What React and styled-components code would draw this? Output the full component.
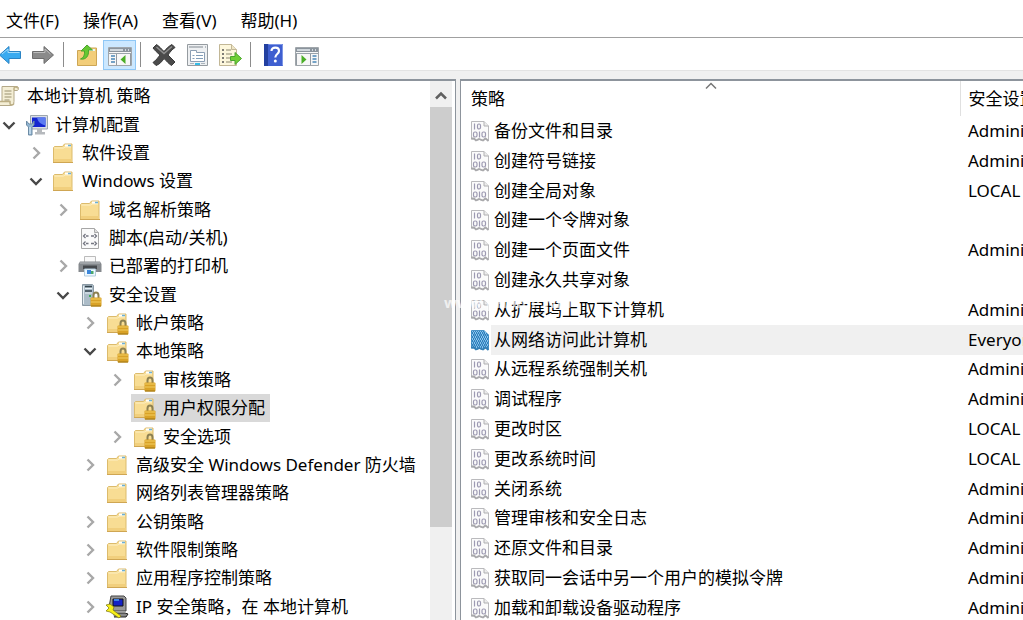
import React from "react";
import styled, { createGlobalStyle, css } from "styled-components";

const Global = createGlobalStyle`
  * { box-sizing: border-box; }
  html, body, #root { height: 100%; margin: 0; }
  body {
    overflow: hidden;
    background: #fff;
    color: #000;
    font-family: "Noto Sans", "Noto Sans CJK SC", sans-serif;
    font-size: 17px;
    line-height: 24px;
  }
  svg { display: block; flex: none; }
`;

const plainButton = css`
  padding: 0;
  border: 0;
  background: none;
  color: inherit;
  font: inherit;
`;

const Page = styled.div`
  position: relative;
  display: flex;
  flex-direction: column;
  height: 100%;
  background: #f0f0f0;
`;

const MenuBar = styled.nav`
  display: flex;
  flex: none;
  gap: 24px;
  height: 37px;
  padding: 4px 6px 0;
  background: #fff;
`;

const MenuButton = styled.button`
  ${plainButton}
  white-space: nowrap;
`;

const Toolbar = styled.div`
  display: flex;
  flex: none;
  align-items: flex-end;
  height: 34px;
  border-top: 1px solid #a0a0a0;
  border-bottom: 1px solid #e3e3e3;
  background: #fff;
`;

const ToolButton = styled.button`
  ${plainButton}
  display: grid;
  place-items: center;
  flex: none;
  width: 33px;
  height: 30px;
  border: 1px solid ${(p) => (p.$active ? "#90c8f6" : "transparent")};
  background: ${(p) => (p.$active ? "#cce8ff" : "transparent")};
`;

const BackButton = styled(ToolButton)`
  justify-items: start;
  width: 26px;
  border-width: 1px 0;
`;

const Divider = styled.span`
  flex: none;
  width: 1px;
  height: 25px;
  margin: 0 6px 3px 4px;
  background: #8c8c8c;
`;

const Workspace = styled.main`
  display: flex;
  flex: 1;
  gap: 4px;
  min-height: 0;
  margin-top: 8px;
`;

const TreePanel = styled.section`
  display: flex;
  flex: none;
  width: 456px;
  min-height: 0;
  padding-right: 3px;
  border: solid #8d949c;
  border-width: 2px 1px 0 0;
  background: #fff;
`;

const Tree = styled.ul`
  display: grid;
  flex: 1;
  grid-auto-rows: minmax(28px, 1fr);
  min-width: 0;
  margin: 0 0 -1px;
  padding: 1px 0 0;
  list-style: none;
`;

const TreeRow = styled.li`
  display: flex;
  align-items: center;
  min-width: 0;
  padding-left: ${(p) => p.$level * 27}px;
`;

const Toggle = styled.button`
  ${plainButton}
  display: grid;
  place-items: center;
  flex: none;
  width: 18px;
  height: 24px;
`;

const ToggleSpace = styled.span`
  flex: none;
  width: ${(p) => (p.$root ? 0 : 18)}px;
`;

const TreeItem = styled.a`
  display: flex;
  align-items: center;
  gap: 7px;
  height: 100%;
  margin-left: ${(p) => (p.$root ? -4 : 5)}px;
  padding: 0 5px 0 ${(p) => (p.$root ? 0 : 1)}px;
  background: ${(p) => (p.$selected ? "#d9d9d9" : "transparent")};
  color: inherit;
  text-decoration: none;
  white-space: nowrap;
`;

const Scrollbar = styled.div`
  display: flex;
  flex: none;
  flex-direction: column;
  width: 22px;
  background: #f0f0f0;
`;

const ScrollButton = styled.button`
  ${plainButton}
  display: grid;
  place-items: center;
  height: 26px;
  padding-top: 3px;
`;

const ScrollThumb = styled.div`
  height: 78%;
  background: #cdcdcd;
`;

const ListPanel = styled.section`
  flex: 1;
  min-width: 0;
  overflow: hidden;
  border: solid #8d949c;
  border-width: 2px 0 0 1px;
  background: #fff;
`;

const PolicyTable = styled.table`
  width: 100%;
  height: calc(100% + 3px);
  border-collapse: collapse;
  table-layout: fixed;
`;

const HeadRow = styled.tr`
  height: 35px;
`;

const HeadCell = styled.th`
  position: relative;
  width: ${(p) => p.$width || "auto"};
  overflow: hidden;
  padding: 1px 0 0 ${(p) => (p.$width ? 10 : 8)}px;
  border-right: ${(p) => (p.$width ? "1px solid #e0e0e0" : "0")};
  font-weight: 400;
  text-align: left;
  white-space: nowrap;
`;

const SortMark = styled.span`
  position: absolute;
  top: 1px;
  left: 49%;
`;

const PolicyRow = styled.tr`
  background: ${(p) =>
    p.$selected ? "linear-gradient(to right, #fff 30px, #f0f0f0 30px)" : "none"};
`;

const PolicyCell = styled.td`
  overflow: hidden;
  padding: 0 0 0 8px;
  white-space: nowrap;
`;

const PolicyName = styled.div`
  display: flex;
  align-items: center;
  gap: 3px;
`;

const Watermark = styled.span`
  position: absolute;
  top: 290px;
  left: 444px;
  color: rgba(255, 255, 255, 0.7);
  font-size: 15px;
  font-weight: 700;
  pointer-events: none;
`;

const FolderShape = () => (
  <>
    <path d="M2.500 6.500l1-1h8l2-2.500h7.500v18.500H2.500z" fill="#f8dd94" stroke="#dcbb6c" />
    <path d="M3.500 7h9l1.500-1h6" fill="none" stroke="#fdf0c4" />
    <path d="M3 18h18v3H3z" fill="#f1cf7d" />
    <path d="M14 4.500h6" stroke="#fff" strokeWidth="2" />
    <path d="M17 4.500h3" stroke="#6bb0d8" strokeWidth="1.500" />
    <path d="M2 21.500h20" stroke="#cfa653" />
  </>
);

const LockShape = () => (
  <>
    <path d="M15.500 15v-2.500a2.500 3 0 0 1 5 0V15" fill="none" stroke="#8d8152" strokeWidth="2" />
    <rect x="12.500" y="14.500" width="11" height="9" rx="1" fill="#d9a227" />
    <path d="M13 16h10M13 19h10" stroke="#f3cf63" />
    <path d="M13 23h10" stroke="#9d7415" />
  </>
);

const Svg = ({ size = 24, children }) => (
  <svg width={size} height={size} viewBox="0 0 24 24" aria-hidden="true">
    {children}
  </svg>
);

const FolderIcon = () => <Svg><FolderShape /></Svg>;
const LockFolderIcon = () => <Svg><FolderShape /><LockShape /></Svg>;

const ScrollIcon = () => (
  <Svg>
    <path d="M6 2.500h15c2 0 2 4 0 4h-3v11c0 3-2 4-4 4H4c-3 0-3-4 0-4h2z" fill="#f4eed5" stroke="#b3a888" />
    <path d="M18 6.500v-2c0-2 3-2 4 0M4 17.500h10v2c0 2 3 2 4 0" fill="none" stroke="#bcae84" strokeWidth="1.500" />
    <path d="M8.500 7h7M8.500 10h7M8.500 13h7M8.500 16h5" stroke="#99906f" />
  </Svg>
);

const ComputerIcon = () => (
  <Svg>
    <path d="M6.500 2.500h17v13.500h-17z" fill="#dadfe4" stroke="#9da6ae" />
    <path d="M8 4.500h13.500v9.500H8z" fill="#1426d0" />
    <path d="M13 4.500h8.500v8c-4-1-7.500-3-8.500-8" fill="#5c7cf1" />
    <path d="M13 16h5v3h3v2.500H11V19h2z" fill="#b6b9bd" />
    <path d="M2.500 8v4l2 2v8h3.500v-8l2-2V8L8 11H5z" fill="#91b5d2" stroke="#6c8ba5" />
    <path d="M6 14v7" stroke="#e5f4fd" />
  </Svg>
);

const ScriptIcon = () => (
  <Svg>
    <path d="M3.500 2.500h13l4 4v16h-17z" fill="#fafafa" stroke="#a6a6a6" />
    <path d="M16.500 2.500v4h4" fill="#ddd" stroke="#aaa" />
    <path d="M7.500 8l-2 2 2 2M16.500 8l2 2-2 2M7.500 15.500l-2 2 2 2M16.500 15.500l2 2-2 2M8 10h2.500M13 10h3M8 17.500h2.500M13 17.500h3" fill="none" stroke="#747681" strokeWidth="1.300" />
  </Svg>
);

const PrinterIcon = () => (
  <Svg>
    <path d="M6.500 2.500h11v6h-11z" fill="#f9f9f9" stroke="#bbb" />
    <path d="M2 7.500h20l1.500 2.500v8H.5v-8z" fill="#85898d" />
    <path d="M2 9h20" stroke="#b8bcc0" />
    <path d="M5 11.500h14v3.500H5z" fill="#45484c" />
    <path d="M6.500 15h11v7h-11z" fill="#edf8ff" stroke="#b2cbdc" />
    <path d="M9 16h4v4H9z" fill="#3c86da" />
    <path d="M13 17h2.500v3H13z" fill="#4ca86c" />
  </Svg>
);

const ServerIcon = () => (
  <Svg>
    <path d="M4.500 1.500h10l1 1v20h-11z" fill="#acbcc8" stroke="#8a99a4" />
    <path d="M5.500 3v18" stroke="#e5edf1" />
    <path d="M7 3.500h7M7 8h7" stroke="#34434c" strokeWidth="1.500" />
    <path d="M7 5.500h7M7 10h7" stroke="#e8f2f7" />
    <path d="M11 13h2" stroke="#3dac55" strokeWidth="2" />
    <LockShape />
  </Svg>
);

const IpIcon = () => (
  <Svg>
    <path d="M6 1h13l2 2v13H8L4 12z" fill="#9a9a9a" stroke="#444" />
    <path d="M8 4h10v7H8z" fill="#1522c7" stroke="#151515" />
    <path d="M9 5h5" stroke="#3f82e6" strokeWidth="2" />
    <path d="M8 18h12l3 1-2 3H9" fill="#888" stroke="#222" />
    <path d="M1 10l4-1 4 3-1 3 8 6-2 2-9-6-4-1 3-3z" fill="#f7ef18" stroke="#79720c" strokeWidth=".7" />
  </Svg>
);

const PolicyIcon = ({ selected }) => (
  <svg width="22" height="22" viewBox="0 0 22 22" aria-hidden="true">
    <path
      d="M2.500 1.500h12.500l4.500 4.500v14.500l-3-2-3 2-3-1-3 1-2-1.500-3 0z"
      fill={selected ? "#8cc6ee" : "#fbfbfb"}
      stroke={selected ? "#4a93c7" : "#bababd"}
    />
    <path d="M15 1.500v4.500h4.500" fill={selected ? "#8fc6ea" : "#ececec"} stroke={selected ? "#4a93c7" : "#b0b0b2"} />
    <g fill="none" stroke={selected ? "#5a9fd0" : "#9d9ab2"} strokeWidth="1.200">
      <path d="M5.500 3.500v6M10.500 11.500v6" />
      <rect x="8.500" y="4" width="3" height="5" rx="1.400" />
      <rect x="4.500" y="12" width="3.500" height="5" rx="1.400" />
      <rect x="13" y="12" width="3.500" height="5" rx="1.400" />
    </g>
    {selected && (
      <path
        d="M2 2.500h14M3 4.500h15M2 6.500h18M3 8.500h17M2 10.500h18M3 12.500h17M2 14.500h18M3 16.500h17M2 18.500h18M3 3.500h14M4 5.500h15M3 7.500h16M4 9.500h15M3 11.500h16M4 13.500h15M3 15.500h16M4 17.500h15"
        stroke="#2f80bd"
        strokeDasharray="1 1"
      />
    )}
    <path d="M2 18.500h3l2 2 3-1.500 4 1.500 2.500-2 3 2.500" fill="none" stroke={selected ? "#347fb5" : "#a9a9ac"} strokeWidth="1.800" />
  </svg>
);

const BackIcon = () => (
  <svg width="22" height="24" viewBox="2 0 22 24" aria-hidden="true">
    <path d="M1.500 12L11 3.500v5h11.500v7H11v5z" fill="#39aaf0" stroke="#2a83c4" />
    <path d="M4 11l6-5v3.500h11.500" fill="none" stroke="#a5dcfb" />
  </svg>
);

const ForwardIcon = () => (
  <Svg>
    <path d="M22.500 12L13 3.500v5H1.500v7H13v5z" fill="#8a8a8a" stroke="#6c6c6c" />
    <path d="M2.500 9.500H14V6l5.500 5" fill="none" stroke="#bdbdbd" />
  </Svg>
);

const UpFolderIcon = () => (
  <Svg>
    <path d="M2.500 7.500h10l2-2.500h7v17.500h-19z" fill="#f2cd79" stroke="#cda655" />
    <path d="M14 7h6" stroke="#e8f4f7" strokeWidth="2" />
    <path d="M5.500 16c3-1 4.500-4 4-8H6l6-6 5.500 5h-4c.5 6-2.500 10-8 9z" fill="#65c832" stroke="#4ba52f" />
  </Svg>
);

const PaneIcon = ({ right }) => (
  <Svg>
    <path d="M.5 4.500h23v18H.5z" fill="#f7f7f7" stroke="#a0a6ab" />
    <path d="M1 5h22v4H1z" fill="#8b949d" />
    <path d="M2 7h13M17 7h1M20 7h1" stroke="#e8edf1" strokeWidth="1.500" />
    <path d="M1 10.500h22" stroke="#9aa3ab" />
    <path d={right ? "M15.500 11v11M1.500 11v11" : "M8.500 11v11M22.500 11v11"} stroke="#929aa1" />
    <path d={right ? "M17.500 13h4M17.500 16h4M17.500 19h4" : "M3 13h4M3 16h4M3 19h4"} stroke="#4a87b7" strokeWidth="1.600" />
    <path d={right ? "M6.500 12l5 4.500-5 4.500z" : "M17.500 12l-5 4.500 5 4.500z"} fill="#4aae27" />
  </Svg>
);

const DeleteIcon = () => (
  <Svg>
    <path d="M4.500 1.500c3 2 5 4.500 7.500 7 2.500-3 5-5.500 8-7l3 3c-3 2-5 4.500-7 7.500l7 7-3.500 3.500c-3-2-5-4.500-7.500-7-2 3-4.500 6-8 7l-3-3c3-2 5-5 7-7.500-3-2.500-5-4.500-7-7z" fill="#4b4b4b" stroke="#3a3a3a" />
    <path d="M4.500 4l7.500 6.500L20 3.500" fill="none" stroke="#909090" strokeWidth="1.500" />
  </Svg>
);

const PropertiesIcon = () => (
  <Svg>
    <path d="M2.500 1.500h20v21h-20z" fill="#eef0f2" stroke="#959ba0" />
    <path d="M4 4h14M20 4h1" stroke="#a6acb2" strokeWidth="1.500" />
    <path d="M5.500 7.500h6v2h8v9h-14z" fill="#fff" stroke="#8c9fb4" />
    <path d="M7.500 12.500h2M7.500 15.500h2M11 12.500h7M11 15.500h7" stroke="#819db9" strokeWidth="1.200" />
    <path d="M5 20.500h4M16 20.500h4" stroke="#acb5bd" />
    <path d="M10 21h5" stroke="#36bce7" strokeWidth="2" />
  </Svg>
);

const ExportIcon = () => (
  <Svg>
    <path d="M1.500 1.500h12l5 5v16h-17z" fill="#fdf7dc" stroke="#c2b796" />
    <path d="M13.500 1.500v5h5" fill="#eee5c6" stroke="#c2b796" />
    <path d="M4 7h2M4 11h2M4 15h2M4 19h2" stroke="#555" strokeWidth="1.500" />
    <path d="M8 7h5M8 11h6M8 15h4M8 19h6" stroke="#8d8870" />
    <path d="M12.500 13.500H17v-4l6.500 6-6.500 6v-4h-4.500z" fill="#70cf35" stroke="#4ba52f" />
  </Svg>
);

const HelpIcon = () => (
  <Svg>
    <path d="M2 1h19v22H2z" fill="#3f5fd0" />
    <path d="M2 1h4v22H2z" fill="#2340a0" />
    <path d="M6.500 1.500h14v21" fill="none" stroke="#7d96e6" />
    <path d="M9.500 8c0-4.500 7.500-4.500 7.500 0 0 3-3.700 3-3.700 6.500" fill="none" stroke="#fff" strokeWidth="2.200" />
    <circle cx="13.300" cy="18" r="1.500" fill="#fff" />
  </Svg>
);

const Chevron = ({ open }) => (
  <svg width="14" height="14" viewBox="0 0 14 14" fill="none" aria-hidden="true">
    <path
      d={open ? "M1.500 4.500L7 10l5.500-5.500" : "M4.500 1.500L10 7l-5.500 5.500"}
      stroke={open ? "#484848" : "#a8a8a8"}
      strokeWidth="2.400"
    />
  </svg>
);

const treeRows = [
  [0, "本地计算机 策略", "root", ScrollIcon],
  [0, "计算机配置", "open", ComputerIcon],
  [1, "软件设置", "closed", FolderIcon],
  [1, "Windows 设置", "open", FolderIcon],
  [2, "域名解析策略", "closed", FolderIcon],
  [2, "脚本(启动/关机)", "leaf", ScriptIcon],
  [2, "已部署的打印机", "closed", PrinterIcon],
  [2, "安全设置", "open", ServerIcon],
  [3, "帐户策略", "closed", LockFolderIcon],
  [3, "本地策略", "open", LockFolderIcon],
  [4, "审核策略", "closed", LockFolderIcon],
  [4, "用户权限分配", "leaf", LockFolderIcon, true],
  [4, "安全选项", "closed", LockFolderIcon],
  [3, "高级安全 Windows Defender 防火墙", "closed", FolderIcon],
  [3, "网络列表管理器策略", "leaf", FolderIcon],
  [3, "公钥策略", "closed", FolderIcon],
  [3, "软件限制策略", "closed", FolderIcon],
  [3, "应用程序控制策略", "closed", FolderIcon],
  [3, "IP 安全策略，在 本地计算机", "closed", IpIcon],
];

const policies = [
  ["备份文件和目录", "Administrators"],
  ["创建符号链接", "Administrators"],
  ["创建全局对象", "LOCAL SERVICE"],
  ["创建一个令牌对象", ""],
  ["创建一个页面文件", "Administrators"],
  ["创建永久共享对象", ""],
  ["从扩展坞上取下计算机", "Administrators"],
  ["从网络访问此计算机", "Everyone", true],
  ["从远程系统强制关机", "Administrators"],
  ["调试程序", "Administrators"],
  ["更改时区", "LOCAL SERVICE"],
  ["更改系统时间", "LOCAL SERVICE"],
  ["关闭系统", "Administrators"],
  ["管理审核和安全日志", "Administrators"],
  ["还原文件和目录", "Administrators"],
  ["获取同一会话中另一个用户的模拟令牌", "Administrators"],
  ["加载和卸载设备驱动程序", "Administrators"],
];

export default function App() {
  return (
    <Page>
      <Global />
      <MenuBar>
        {["文件(F)", "操作(A)", "查看(V)", "帮助(H)"].map((label) => (
          <MenuButton key={label}>{label}</MenuButton>
        ))}
      </MenuBar>
      <Toolbar>
        <BackButton aria-label="后退"><BackIcon /></BackButton>
        <ToolButton aria-label="前进"><ForwardIcon /></ToolButton>
        <Divider />
        <ToolButton aria-label="上一级"><UpFolderIcon /></ToolButton>
        <ToolButton aria-label="显示控制台树" $active><PaneIcon /></ToolButton>
        <Divider />
        <ToolButton aria-label="删除"><DeleteIcon /></ToolButton>
        <ToolButton aria-label="属性"><PropertiesIcon /></ToolButton>
        <ToolButton aria-label="导出列表"><ExportIcon /></ToolButton>
        <Divider />
        <ToolButton aria-label="帮助"><HelpIcon /></ToolButton>
        <ToolButton aria-label="显示操作窗格"><PaneIcon right /></ToolButton>
      </Toolbar>
      <Workspace>
        <TreePanel>
          <Tree>
            {treeRows.map(([level, label, state, Icon, selected]) => (
              <TreeRow key={label} $level={level}>
                {state === "open" || state === "closed" ? (
                  <Toggle aria-label={label} aria-expanded={state === "open"}>
                    <Chevron open={state === "open"} />
                  </Toggle>
                ) : (
                  <ToggleSpace $root={state === "root"} />
                )}
                <TreeItem href="#" $root={state === "root"} $selected={selected}>
                  <Icon />
                  {label}
                </TreeItem>
              </TreeRow>
            ))}
          </Tree>
          <Scrollbar>
            <ScrollButton aria-label="向上滚动">
              <svg width="14" height="14" viewBox="0 0 14 14" fill="none" aria-hidden="true">
                <path d="M2 9.500l5-5 5 5" stroke="#606060" strokeWidth="2.500" />
              </svg>
            </ScrollButton>
            <ScrollThumb />
          </Scrollbar>
        </TreePanel>
        <ListPanel>
          <PolicyTable>
            <thead>
              <HeadRow>
                <HeadCell $width="499px">
                  策略
                  <SortMark>
                    <svg width="12" height="8" viewBox="0 0 12 8" fill="none" aria-hidden="true">
                      <path d="M1 6.500l5-5 5 5" stroke="#777" strokeWidth="1.500" />
                    </svg>
                  </SortMark>
                </HeadCell>
                <HeadCell>安全设置</HeadCell>
              </HeadRow>
            </thead>
            <tbody>
              {policies.map(([name, setting, selected]) => (
                <PolicyRow key={name} $selected={selected}>
                  <PolicyCell>
                    <PolicyName>
                      <PolicyIcon selected={selected} />
                      {name}
                    </PolicyName>
                  </PolicyCell>
                  <PolicyCell>{setting}</PolicyCell>
                </PolicyRow>
              ))}
            </tbody>
          </PolicyTable>
        </ListPanel>
      </Workspace>
      <Watermark>www.pHome.NET</Watermark>
    </Page>
  );
}
